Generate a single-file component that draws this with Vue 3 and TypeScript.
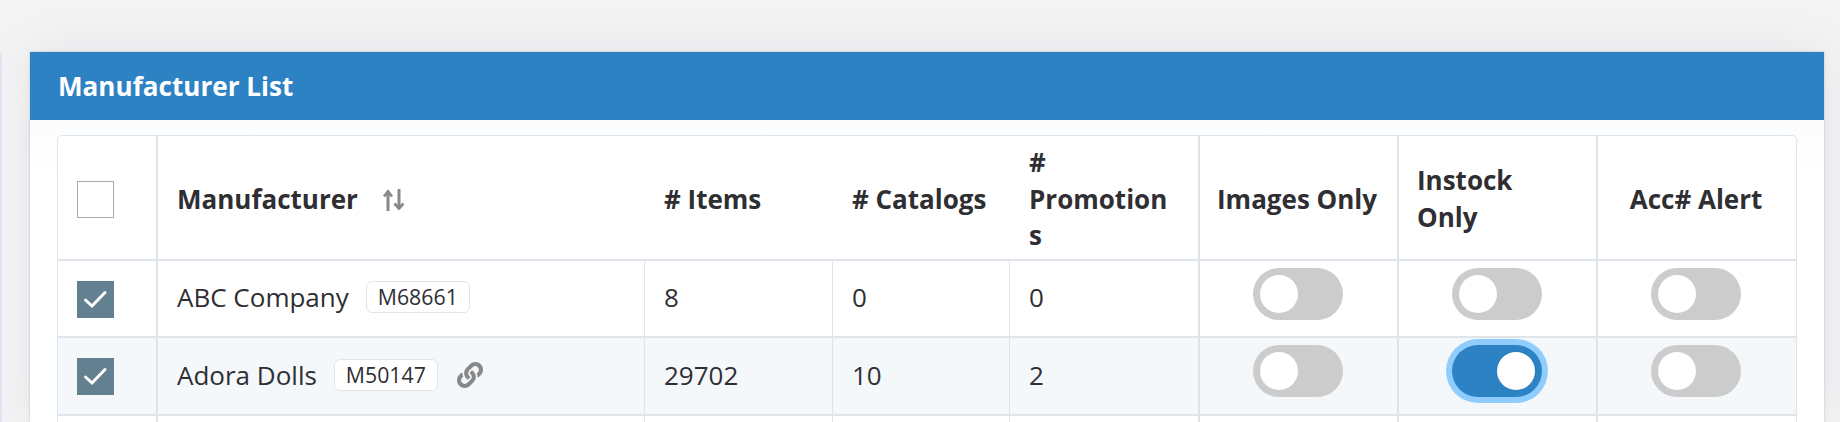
<script setup lang="ts">
interface Row {
  name: string
  code: string
  items: number | string
  catalogs: number | string
  promotions: number | string
  linked: boolean
  images: boolean
  instock: boolean
  alert: boolean
}

const rows: Row[] = [
  { name: 'ABC Company', code: 'M68661', items: 8, catalogs: 0, promotions: 0, linked: false, images: false, instock: false, alert: false },
  { name: 'Adora Dolls', code: 'M50147', items: 29702, catalogs: 10, promotions: 2, linked: true, images: false, instock: true, alert: false },
]
</script>

<template>
  <div class="page">
    <div class="sidebar-edge" />
    <section class="panel">
      <h1 class="panel-title">Manufacturer List</h1>
      <div class="panel-body">
        <table class="list">
          <colgroup>
            <col style="width: 100px" />
            <col style="width: 487px" />
            <col style="width: 188px" />
            <col style="width: 177px" />
            <col style="width: 190px" />
            <col style="width: 199px" />
            <col style="width: 199px" />
            <col style="width: 198px" />
          </colgroup>
          <thead>
            <tr>
              <th class="cell-check divided"><span class="check" /></th>
              <th>
                <span class="sort-head">
                  Manufacturer
                  <svg class="sort-icon" viewBox="0 0 21 22" width="21" height="22" fill="none" stroke="#888" stroke-width="3">
                    <path d="M5 22V2" />
                    <path d="M1 7.500l4-5 4 5" stroke-width="2.800" />
                    <path d="M16 0v20" />
                    <path d="M11.500 14.500l4.500 5 4.500-5" stroke-width="2.800" />
                  </svg>
                </span>
              </th>
              <th># Items</th>
              <th># Catalogs</th>
              <th class="divided">#<br />Promotion<br />s</th>
              <th class="divided head-images">Images Only</th>
              <th class="divided head-instock">Instock<br />Only</th>
              <th class="head-alert">Acc# Alert</th>
            </tr>
          </thead>
          <tbody>
            <tr v-for="row in rows" :key="row.code" :class="{ stripe: row.linked }">
              <td class="cell-check divided">
                <span class="check checked">
                  <svg viewBox="0 0 37 37" width="37" height="37" fill="none" stroke="#fff" stroke-width="3" stroke-linecap="round">
                    <path d="M8.500 19l6.500 6L28 11.500" />
                  </svg>
                </span>
              </td>
              <td class="thin text">
                <span class="name-wrap">
                  {{ row.name }}
                  <span class="code">{{ row.code }}</span>
                  <svg v-if="row.linked" class="link-icon" viewBox="0 0 512 512" width="26" height="26">
                    <path fill="#888" d="M326.612 185.391c59.747 59.809 58.927 155.698.36 214.59-.11.12-.24.25-.36.37l-67.2 67.2c-59.27 59.27-155.699 59.262-214.96 0-59.27-59.26-59.27-155.7 0-214.96l37.106-37.106c9.84-9.84 26.786-3.3 27.294 10.606.648 17.722 3.826 35.527 9.69 52.721 1.986 5.822.567 12.262-3.783 16.612l-13.087 13.087c-28.026 28.026-28.905 73.66-1.155 101.96 28.024 28.579 74.086 28.749 102.325.51l67.2-67.19c28.191-28.191 28.073-73.757 0-101.83-3.701-3.694-7.429-6.564-10.341-8.569a16.037 16.037 0 0 1-6.947-12.606c-.396-10.567 3.348-21.456 11.698-29.806l21.054-21.055c5.521-5.521 14.182-6.199 20.584-1.731a152.482 152.482 0 0 1 20.522 17.197zM467.547 44.449c-59.261-59.262-155.69-59.27-214.96 0l-67.2 67.2c-.12.12-.25.25-.36.37-58.566 58.892-59.387 154.781.36 214.59a152.454 152.454 0 0 0 20.521 17.196c6.402 4.468 15.064 3.789 20.584-1.731l21.054-21.055c8.35-8.35 12.094-19.239 11.698-29.806a16.037 16.037 0 0 0-6.947-12.606c-2.912-2.005-6.64-4.875-10.341-8.569-28.073-28.073-28.191-73.639 0-101.83l67.2-67.19c28.239-28.239 74.3-28.069 102.325.51 27.75 28.3 26.872 73.934-1.155 101.96l-13.087 13.087c-4.35 4.35-5.769 10.79-3.783 16.612 5.864 17.194 9.042 34.999 9.69 52.721.509 13.906 17.454 20.446 27.294 10.606l37.106-37.106c59.271-59.259 59.271-155.699.001-214.959z" />
                  </svg>
                </span>
              </td>
              <td class="thin text">{{ row.items }}</td>
              <td class="thin text">{{ row.catalogs }}</td>
              <td class="divided text">{{ row.promotions }}</td>
              <td class="divided center"><span class="toggle" :class="{ on: row.images }"><i /></span></td>
              <td class="divided center"><span class="toggle" :class="{ on: row.instock }"><i /></span></td>
              <td class="center last"><span class="toggle" :class="{ on: row.alert }"><i /></span></td>
            </tr>
            <tr class="clipped">
              <td class="cell-check divided"></td>
              <td class="thin"></td>
              <td class="thin"></td>
              <td class="thin"></td>
              <td class="divided"></td>
              <td class="divided"></td>
              <td class="divided"></td>
              <td></td>
            </tr>
          </tbody>
        </table>
      </div>
    </section>
  </div>
</template>

<style>
html,
body {
  margin: 0;
  height: 100%;
  overflow: hidden;
  background: #f4f4f5;
}
</style>

<style scoped>
.page {
  display: flex;
  align-items: flex-start;
  height: 422px;
  overflow: hidden;
  padding: 52px 16px 0 0;
  box-sizing: border-box;
  font-family: "Open Sans", "Liberation Sans", sans-serif;
  color: #2f2f33;
}

.sidebar-edge {
  flex: none;
  width: 2px;
  height: 370px;
  margin-right: 28px;
  background: #dfe7f3;
}

.panel {
  flex: 1;
  min-width: 0;
  height: 370px;
  background: #fff;
  box-shadow: 0 0 2px rgba(130, 140, 160, 0.5), 0 0 45px rgba(120, 125, 140, 0.14);
}

.panel-title {
  margin: 0;
  height: 68px;
  padding-left: 28px;
  background: #2d82c4;
  color: #fff;
  font-size: 26.1px;
  font-weight: 700;
  line-height: 68px;
}

.panel-body {
  padding: 15px 27px 0 27px;
  background: linear-gradient(180deg, #fbfcfd 0, #fff 60px);
}

.list {
  width: 1740px;
  table-layout: fixed;
  border-collapse: separate;
  border-spacing: 0;
  background: #fff;
  border: solid #dfe3ea;
  border-width: 1px 1px 0 1px;
  border-radius: 5px 5px 0 0;
  font-size: 26px;
}

th,
td {
  padding: 0 20px 0 19px;
  box-sizing: border-box;
  border-bottom: 2px solid #dfe3ea;
  text-align: left;
  overflow-wrap: anywhere;
}

th {
  height: 125px;
  padding-top: 3px;
  font-weight: 700;
  line-height: 36.6px;
}

td {
  height: 77px;
}

td.text {
  padding-bottom: 3px;
}

tbody tr:nth-child(2) td {
  height: 78px;
}

.clipped td {
  height: 40px;
}

.cell-check {
  padding: 0 19px;
}

th.cell-check {
  padding-top: 4px;
}

tbody tr:first-child .cell-check {
  padding-top: 2px;
}

.head-images {
  padding: 3px 23px 0 17px;
  text-align: center;
  white-space: nowrap;
}

.head-instock {
  padding-left: 18px;
}

.head-alert {
  padding: 3px 21px 0 19px;
  text-align: center;
}

.divided {
  border-right: 2px solid #dfe3ea;
}

.thin {
  border-right: 1px solid #dfe3ea;
}

td.center {
  padding: 0 21px 0 19px;
  text-align: center;
}

td.last {
  padding: 0 20px 0 18px;
}

.stripe td {
  background: #f5f8fb;
}

.check {
  display: block;
  width: 37px;
  height: 37px;
  box-sizing: border-box;
  border: 1px solid #aaa;
  background: #fff;
}

.check.checked {
  border: none;
  background: #62808f;
}

.check svg {
  display: block;
}

.sort-head,
.name-wrap {
  display: inline-flex;
  align-items: center;
}

.sort-icon {
  margin-left: 25px;
  margin-top: 2px;
}

.code {
  margin-left: 17px;
  padding: 0 11px;
  border: 1px solid #e1e5ea;
  border-radius: 6px;
  background: #fff;
  font-size: 21.3px;
  line-height: 30px;
}

.link-icon {
  margin-left: 19px;
}

.toggle {
  position: relative;
  display: inline-block;
  vertical-align: middle;
  width: 90px;
  height: 52px;
  margin-bottom: 9px;
  border-radius: 26px;
  background: #ccc;
}

.stripe .toggle {
  margin-bottom: 11px;
}

.toggle i {
  position: absolute;
  top: 7px;
  left: 7px;
  width: 38px;
  height: 38px;
  border-radius: 50%;
  background: #fff;
}

.toggle.on {
  background: #2d82c4;
  box-shadow: 0 0 0 6px #90cdff;
}

.toggle.on i {
  left: 45px;
}
</style>
